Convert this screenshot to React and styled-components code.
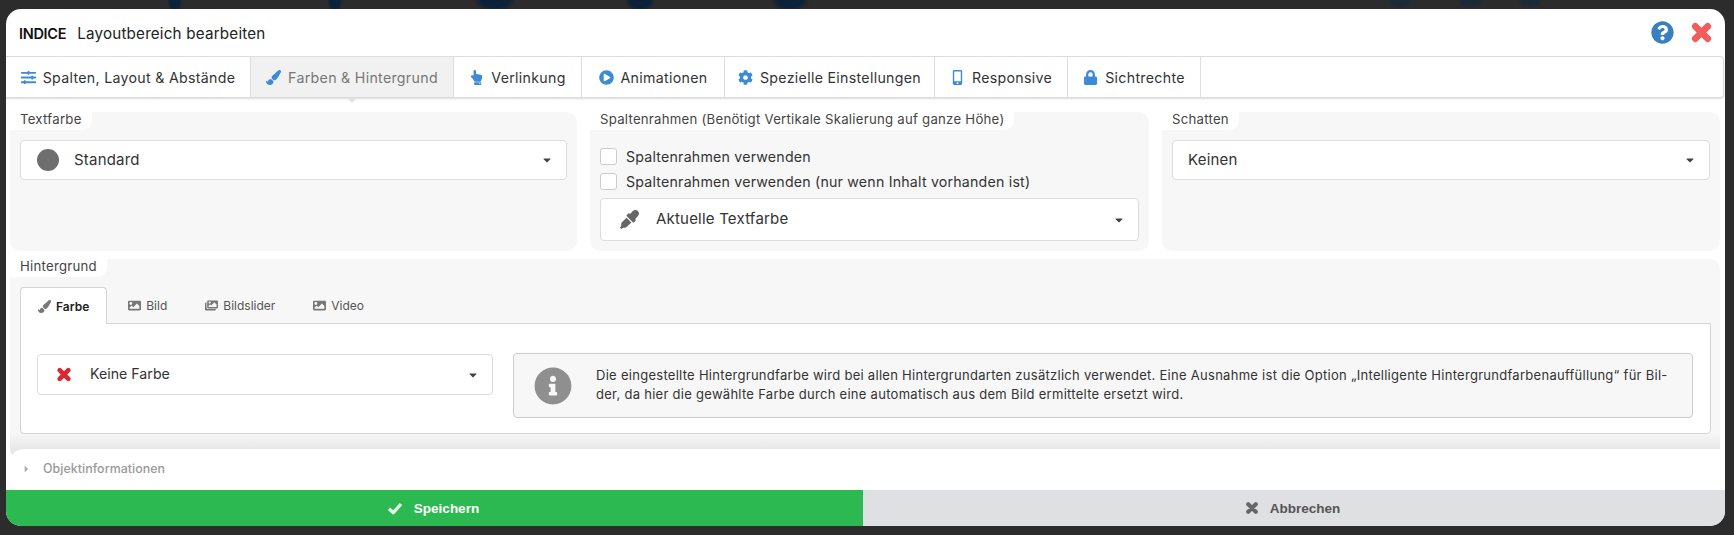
import React from "react";
import styled, { createGlobalStyle } from "styled-components";
import {
  FaSlidersH,
  FaPaintBrush,
  FaHandPointUp,
  FaPlayCircle,
  FaCog,
  FaMobileAlt,
  FaLock,
  FaQuestionCircle,
  FaEyeDropper,
  FaImage,
  FaImages,
  FaInfoCircle,
  FaCaretDown,
  FaCaretRight,
} from "react-icons/fa";

const GlobalStyle = createGlobalStyle`
  html, body {
    margin: 0;
    height: 535px;
    overflow: hidden;
    background-color: #2c2c2c;
    background-image:
      radial-gradient(ellipse 8px 14px at 175px 0, #0c2238 60%, transparent),
      radial-gradient(ellipse 8px 14px at 335px 0, #0c2238 60%, transparent),
      radial-gradient(ellipse 22px 12px at 495px 0, #0c2238 60%, transparent),
      radial-gradient(ellipse 16px 12px at 640px 0, #0c2238 60%, transparent),
      radial-gradient(ellipse 20px 12px at 790px 0, #0c2238 60%, transparent),
      radial-gradient(ellipse 14px 9px at 1400px 0, #1c2a38 60%, transparent),
      radial-gradient(ellipse 14px 9px at 1470px 0, #1c2a38 60%, transparent),
      radial-gradient(ellipse 14px 9px at 1530px 0, #1c2a38 60%, transparent);
    background-repeat: no-repeat;
    font-family: Inter, "Open Sans", sans-serif;
    color: #333;
  }
`;

const tabs = [
  { icon: <FaSlidersH />, label: "Spalten, Layout & Abstände", width: 245 },
  { icon: <FaPaintBrush />, label: "Farben & Hintergrund", width: 203, active: true },
  { icon: <FaHandPointUp />, label: "Verlinkung", width: 128 },
  { icon: <FaPlayCircle />, label: "Animationen", width: 143 },
  { icon: <FaCog />, label: "Spezielle Einstellungen", width: 210 },
  { icon: <FaMobileAlt />, label: "Responsive", width: 133 },
  { icon: <FaLock />, label: "Sichtrechte", width: 133 },
];

const backgroundTabs = [
  { icon: <FaPaintBrush />, label: "Farbe", active: true },
  { icon: <FaImage />, label: "Bild" },
  { icon: <FaImages />, label: "Bildslider" },
  { icon: <FaImage />, label: "Video" },
];

// the thick cross and tick of the old icon font, the packages only have thinner ones
const Cross = ({ className }) => (
  <svg className={className} viewBox="0 0 24 24">
    <path
      d="M5.5 5.5 L18.5 18.5 M18.5 5.5 L5.5 18.5"
      fill="none"
      stroke="currentColor"
      strokeWidth="7"
      strokeLinecap="round"
    />
  </svg>
);

const Tick = ({ className }) => (
  <svg className={className} viewBox="0 0 24 20">
    <path
      d="M3 11 L9.5 17 L21 4"
      fill="none"
      stroke="currentColor"
      strokeWidth="5"
      strokeLinejoin="round"
    />
  </svg>
);

const App = () => {
  return (
    <>
      <GlobalStyle />
      <Modal>
        <Header>
          <Title>
            <strong>INDICE</strong>
            <span>Layoutbereich bearbeiten</span>
          </Title>
          <HeaderIcons>
            <HelpIcon />
            <CloseIcon />
          </HeaderIcons>
        </Header>

        <TabBar>
          {tabs.map((tab) => (
            <Tab key={tab.label} $active={tab.active} $width={tab.width}>
              <TabIcon>{tab.icon}</TabIcon>
              {tab.label}
            </Tab>
          ))}
        </TabBar>

        <Columns>
          <Panel>
            <PanelLabel>Textfarbe</PanelLabel>
            <PanelBody>
              <Select $height={40}>
                <SelectIcon><ColorDot /></SelectIcon>
                <SelectText>Standard</SelectText>
                <FaCaretDown />
              </Select>
            </PanelBody>
          </Panel>
          <Panel>
            <PanelLabel>Spaltenrahmen (Benötigt Vertikale Skalierung auf ganze Höhe)</PanelLabel>
            <PanelBody>
              <CheckRows>
                <CheckRow>
                  <CheckBox />
                  Spaltenrahmen verwenden
                </CheckRow>
                <CheckRow>
                  <CheckBox />
                  Spaltenrahmen verwenden (nur wenn Inhalt vorhanden ist)
                </CheckRow>
              </CheckRows>
              <Select $height={43}>
                <SelectIcon $left={19} $width={36}><DropperIcon /></SelectIcon>
                <SelectText>Aktuelle Textfarbe</SelectText>
                <FaCaretDown />
              </Select>
            </PanelBody>
          </Panel>
          <Panel>
            <PanelLabel>Schatten</PanelLabel>
            <PanelBody>
              <Select $height={40}>
                <SelectIcon $left={15} $width={0} />
                <SelectText>Keinen</SelectText>
                <FaCaretDown />
              </Select>
            </PanelBody>
          </Panel>
        </Columns>

        <BackgroundPanel>
          <PanelLabel>Hintergrund</PanelLabel>
          <InnerTabs>
            {backgroundTabs.map((tab) => (
              <InnerTab key={tab.label} $active={tab.active}>
                {tab.icon}
                {tab.label}
              </InnerTab>
            ))}
          </InnerTabs>
          <TabContent>
            <ColorSelect>
              <Select $height={41}>
                <SelectIcon $left={18} $width={34}><NoColorIcon /></SelectIcon>
                <SelectText $small>Keine Farbe</SelectText>
                <FaCaretDown />
              </Select>
            </ColorSelect>
            <InfoBox>
              <InfoIcon />
              <p>
                Die eingestellte Hintergrundfarbe wird bei allen Hintergrundarten zusätzlich verwendet. Eine Ausnahme ist die Option „Intelligente Hintergrundfarbenauffüllung“ für Bil-
                <br />
                der, da hier die gewählte Farbe durch eine automatisch aus dem Bild ermittelte ersetzt wird.
              </p>
            </InfoBox>
          </TabContent>
        </BackgroundPanel>

        <ObjectInfo>
          <FaCaretRight />
          Objektinformationen
        </ObjectInfo>

        <Footer>
          <SaveButton>
            <Tick />
            Speichern
          </SaveButton>
          <CancelButton>
            <Cross />
            Abbrechen
          </CancelButton>
        </Footer>
      </Modal>
    </>
  );
};

const Modal = styled.div`
  box-sizing: border-box;
  width: 1719px;
  height: 517px;
  margin: 9px 0 0 6px;
  background: #fff;
  border-radius: 15px;
  overflow: hidden;
  display: flex;
  flex-direction: column;
`;
const Header = styled.div`
  height: 47px;
  flex: none;
  display: flex;
  align-items: center;
  justify-content: space-between;
  padding: 0 12px 0 13px;
`;
const Title = styled.div`
  display: flex;
  align-items: baseline;
  gap: 11px;
  font-size: 15.2px;
  letter-spacing: 0.2px;
  color: #222;
  padding-top: 1px;

  strong {
    font-weight: 600;
    color: #111;
    font-size: 14.5px;
    letter-spacing: -0.3px;
  }
`;
const HeaderIcons = styled.div`
  display: flex;
  align-items: center;
  gap: 16px;
`;
const HelpIcon = styled(FaQuestionCircle)`
  width: 23px;
  height: 23px;
  color: #3a7fc1;
`;
const CloseIcon = styled(Cross)`
  width: 23px;
  height: 25px;
  color: #f25c5c;
`;
const TabBar = styled.div`
  box-sizing: border-box;
  height: 42px;
  flex: none;
  display: flex;
  border: 1px solid #dcdcdc;
  border-left: 0;
  border-radius: 0 4px 4px 0;
  margin-right: 1px;
  box-shadow: 0 1px 2px rgba(0, 0, 0, 0.14);
`;
const Tab = styled.div`
  position: relative;
  box-sizing: border-box;
  width: ${(p) => p.$width}px;
  display: flex;
  align-items: center;
  justify-content: center;
  gap: 7px;
  font-size: 14.2px;
  letter-spacing: 0.3px;
  border-right: 1px solid #dcdcdc;
  color: ${(p) => (p.$active ? "#777" : "#333")};
  background: ${(p) => (p.$active ? "#f1f1f1" : "#fff")};

  ${(p) =>
    p.$active &&
    `&::after {
      content: "";
      position: absolute;
      left: 50%;
      bottom: -6px;
      margin-left: -5px;
      border: 5px solid transparent;
      border-bottom: 0;
      border-top-color: #e2e2e2;
    }`}
`;
const TabIcon = styled.span`
  display: flex;
  color: #3d8ad6;
  font-size: 15px;
`;
const Columns = styled.div`
  display: grid;
  grid-template-columns: 567px 559px 558px;
  gap: 13px;
  padding: 14px 5px 0 4px;
  height: 139px;
  flex: none;
`;
const Panel = styled.div`
  background: #f7f7f7;
  border-radius: 10px;
  overflow: hidden;
`;
const PanelLabel = styled.div`
  box-sizing: border-box;
  width: fit-content;
  height: 18px;
  padding: 0 10px;
  margin-bottom: 10px;
  background: #fff;
  border-bottom-right-radius: 10px;
  font-size: 13.2px;
  letter-spacing: 0.25px;
  line-height: 15px;
  color: #444;
`;
const PanelBody = styled.div`
  padding: 0 10px;
`;
const Select = styled.div`
  box-sizing: border-box;
  width: 100%;
  height: ${(p) => p.$height}px;
  display: flex;
  align-items: center;
  background: #fff;
  border: 1px solid #dcdcdc;
  border-radius: 4px;
  padding-right: 14px;

  > svg {
    width: 10px;
    height: 12px;
    color: #444;
  }
`;
const SelectIcon = styled.span`
  display: flex;
  align-items: center;
  margin-left: ${(p) => p.$left ?? 16}px;
  width: ${(p) => p.$width ?? 37}px;
  flex: none;
`;
const SelectText = styled.span`
  flex: 1;
  padding-bottom: 2px;
  font-size: ${(p) => (p.$small ? "14.2px" : "15px")};
  letter-spacing: ${(p) => (p.$small ? "0" : "0.2px")};
  color: #333;
`;
const ColorDot = styled.span`
  width: 22px;
  height: 22px;
  border-radius: 50%;
  background: #6e6e6e;
`;
const DropperIcon = styled(FaEyeDropper)`
  width: 19px;
  height: 19px;
  color: #666;
`;
const NoColorIcon = styled(Cross)`
  width: 16px;
  height: 17px;
  color: #d9292f;
`;
const CheckRows = styled.div`
  padding: 4px 0;
`;
const CheckRow = styled.div`
  height: 25px;
  display: flex;
  align-items: center;
  gap: 9px;
  font-size: 14.2px;
  letter-spacing: 0.2px;
  color: #333;
`;
const CheckBox = styled.span`
  box-sizing: border-box;
  width: 17px;
  height: 17px;
  background: #fff;
  border: 1px solid #ccc;
  border-radius: 3px;
`;
const BackgroundPanel = styled.div`
  margin: 8px 5px 0 4px;
  height: 200px;
  flex: none;
  border-radius: 10px;
  background: linear-gradient(to bottom, #f7f7f7 174px, #e8e8e8 190px);
`;
const InnerTabs = styled.div`
  display: flex;
  height: 36px;
  margin: 0 9px 0 10px;
`;
const InnerTab = styled.div`
  box-sizing: border-box;
  height: ${(p) => (p.$active ? "37px" : "36px")};
  padding: 0 ${(p) => (p.$active ? "17px" : "18px")};
  margin-right: ${(p) => (p.$active ? "2px" : "0")};
  display: flex;
  align-items: center;
  gap: 5px;
  font-size: 12px;
  font-weight: ${(p) => (p.$active ? 600 : 400)};
  color: ${(p) => (p.$active ? "#222" : "#555")};
  background: ${(p) => (p.$active ? "#fff" : "transparent")};
  border: 1px solid ${(p) => (p.$active ? "#d4d4d4" : "transparent")};
  border-bottom: 0;
  border-radius: 4px 4px 0 0;
  position: relative;
  z-index: 1;

  svg {
    width: 13px;
    height: 13px;
    color: #777;
  }
`;
const TabContent = styled.div`
  box-sizing: border-box;
  margin: 0 9px 0 10px;
  height: 111px;
  background: #fff;
  border: 1px solid #d4d4d4;
  border-radius: 0 0 4px 4px;
  padding: 29px 17px 0 16px;
  display: flex;
  gap: 20px;
  align-items: flex-start;
`;
const ColorSelect = styled.div`
  width: 456px;
  flex: none;
  margin-top: 1px;
`;
const InfoBox = styled.div`
  box-sizing: border-box;
  flex: 1;
  height: 65px;
  background: #f7f7f7;
  border: 1px solid #ccc;
  border-radius: 4px;
  display: flex;
  align-items: center;
  gap: 24px;
  padding-left: 20px;

  p {
    margin: 0 0 1px;
    font-size: 13px;
    letter-spacing: 0.28px;
    line-height: 19.5px;
    color: #333;
    white-space: nowrap;
  }
`;
const InfoIcon = styled(FaInfoCircle)`
  width: 38px;
  height: 38px;
  color: #8f8f8f;
  flex: none;
`;
const ObjectInfo = styled.div`
  position: relative;
  z-index: 1;
  box-sizing: border-box;
  height: 41px;
  flex: none;
  margin-top: -10px;
  margin-left: 4px;
  padding: 0 0 2px 13px;
  background: #fff;
  border-radius: 14px 0 0 0;
  display: flex;
  align-items: center;
  gap: 13px;
  font-size: 12.4px;
  letter-spacing: 0.05px;
  font-weight: 500;
  color: #999;

  svg {
    width: 7px;
    height: 10px;
    color: #aaa;
  }
`;
const Footer = styled.div`
  display: flex;
  height: 36px;
  flex: none;
  font-family: "Liberation Sans", Arial, sans-serif;
  font-size: 13.5px;
  font-weight: 700;
`;
const SaveButton = styled.div`
  box-sizing: border-box;
  width: 857px;
  display: flex;
  align-items: center;
  justify-content: center;
  gap: 11px;
  padding-right: 3px;
  color: #fff;
  background: #2cb951;

  svg {
    width: 16px;
    height: 14px;
    color: #e4f6e9;
  }
`;
const CancelButton = styled.div`
  box-sizing: border-box;
  flex: 1;
  display: flex;
  align-items: center;
  justify-content: center;
  gap: 11px;
  padding-right: 3px;
  color: #555;
  background: #dfe0e2;

  svg {
    width: 14px;
    height: 14px;
    color: #666;
  }
`;

export default App;
